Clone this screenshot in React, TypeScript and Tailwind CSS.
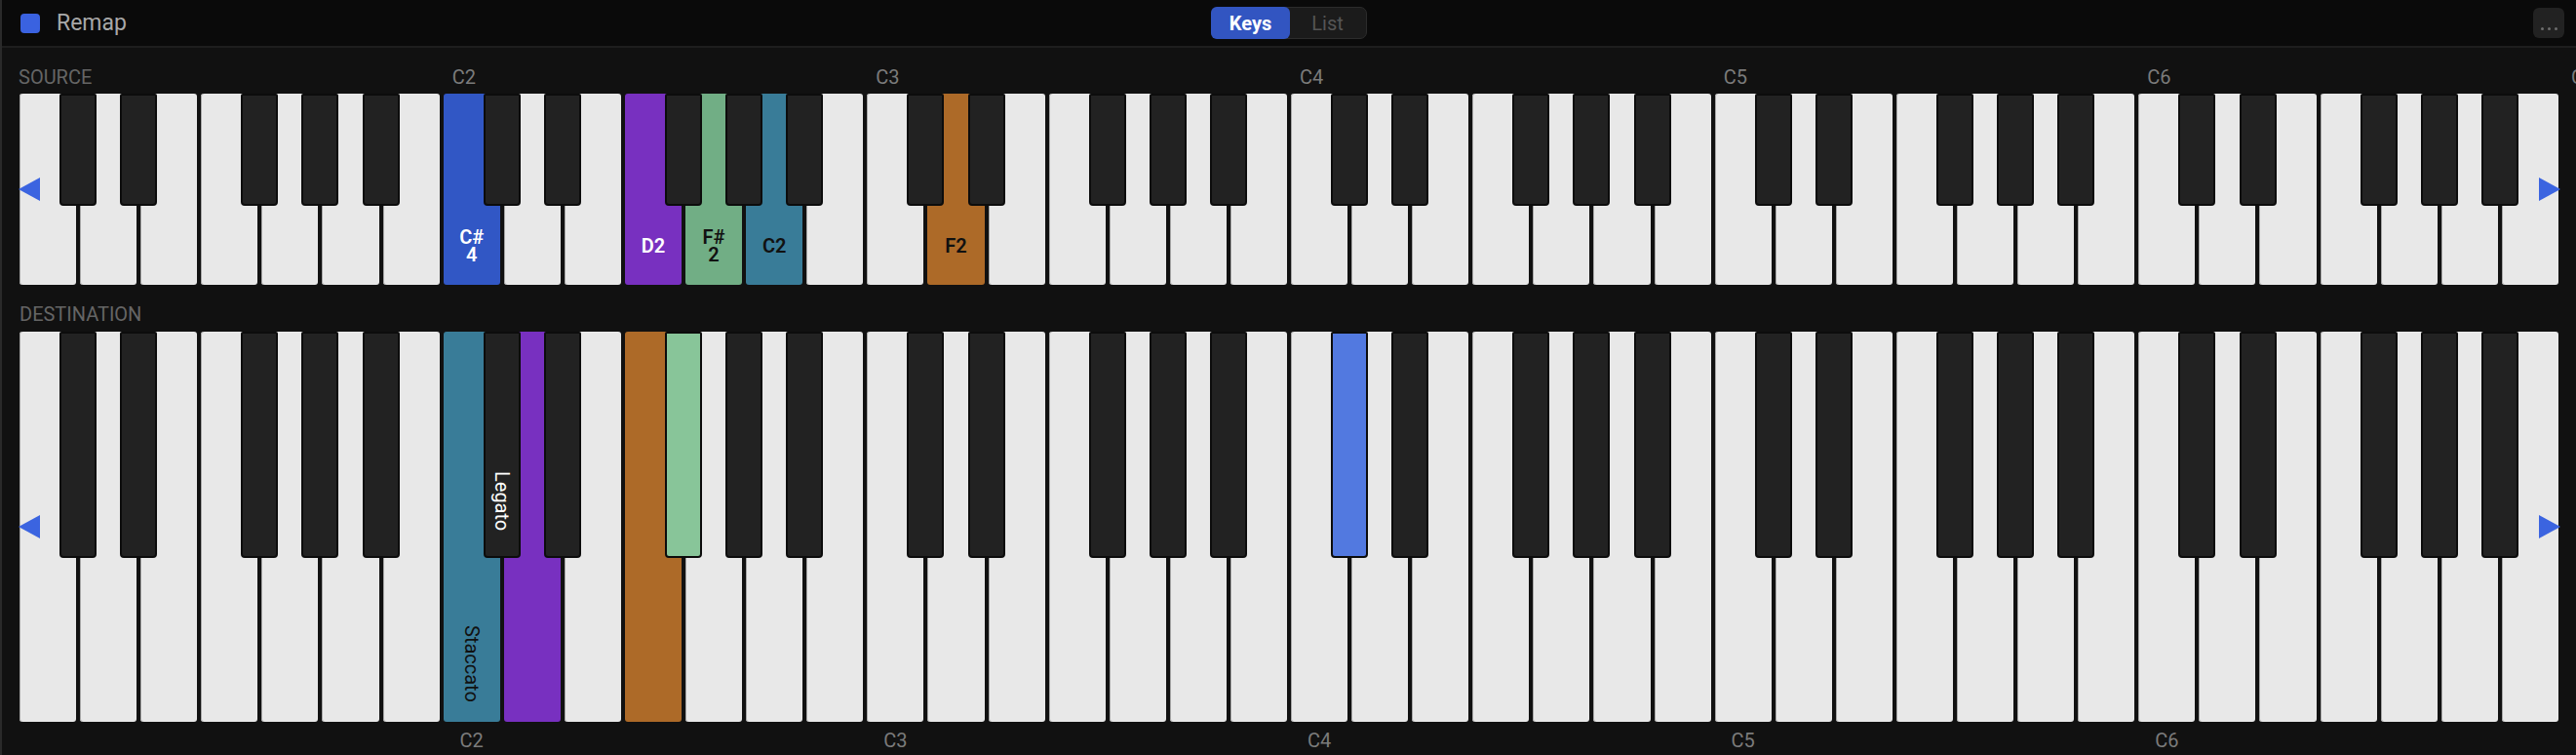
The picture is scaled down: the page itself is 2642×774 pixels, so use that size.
import clsx from "clsx";

const WHITE_COUNT = 42;
const WHITES = Array.from({ length: WHITE_COUNT }, (_, i) => i);
// white keys that have a black key on their right (C, D, F, G, A)
const HAS_SHARP = [true, true, false, true, true, true, false];

type WhiteMark = {
  bg: string;
  text?: string;
  lines?: string[];
  vertical?: string;
};

type BlackMark = {
  bg?: string;
  vertical?: string;
};

const sourceWhites: Record<number, WhiteMark> = {
  7: { bg: "bg-[#3157c5]", text: "text-white", lines: ["C#", "4"] },
  10: { bg: "bg-[#7830c0]", text: "text-white", lines: ["D2"] },
  11: { bg: "bg-[#71ae85]", text: "text-[#111]", lines: ["F#", "2"] },
  12: { bg: "bg-[#397c98]", text: "text-[#111]", lines: ["C2"] },
  15: { bg: "bg-[#ad6a28]", text: "text-[#111]", lines: ["F2"] },
};

const destWhites: Record<number, WhiteMark> = {
  7: { bg: "bg-[#397c98]", text: "text-[#111]", vertical: "Staccato" },
  8: { bg: "bg-[#7830c0]" },
  10: { bg: "bg-[#ad6a28]" },
};

// keyed by the white key on the left of the black key
const destBlacks: Record<number, BlackMark> = {
  7: { vertical: "Legato" },
  10: { bg: "bg-[#88c599]" },
  21: { bg: "bg-[#5279e0]" },
};

function octaveOf(w: number) {
  return 1 + Math.floor(w / 7);
}

function Arrow({ dir }: { dir: "left" | "right" }) {
  return (
    <svg
      width="22"
      height="24"
      viewBox="0 0 22 24"
      className={clsx(
        "pointer-events-none absolute top-1/2 -translate-y-1/2",
        dir === "left" ? "left-[-1px]" : "right-[-2px]"
      )}
    >
      <polygon
        points={dir === "left" ? "0,12 22,0 22,24" : "22,12 0,0 0,24"}
        fill="#3b64e0"
      />
    </svg>
  );
}

function WhiteKey({ mark, blackH }: { mark?: WhiteMark; blackH: string }) {
  return (
    <div
      className={clsx(
        "flex min-w-0 flex-1 flex-col rounded-[3px]",
        mark ? mark.bg : "bg-[#e8e8e8] shadow-[inset_1px_0_0_#a6a6a6]"
      )}
    >
      {mark?.lines && (
        <>
          <div className={clsx("shrink-0", blackH)} />
          <div
            className={clsx(
              "flex flex-1 flex-col items-center justify-center text-[20px] font-semibold leading-[18px]",
              mark.text
            )}
          >
            {mark.lines.map((l) => (
              <span key={l}>{l}</span>
            ))}
          </div>
        </>
      )}
      {mark?.vertical && (
        <div
          className={clsx(
            "flex flex-1 flex-col items-center justify-end pb-[20px] text-[20px] leading-6",
            mark.text
          )}
        >
          <span className="[writing-mode:vertical-rl]">{mark.vertical}</span>
        </div>
      )}
    </div>
  );
}

function Keyboard({
  height,
  blackH,
  whites,
  blacks,
}: {
  height: string;
  blackH: string;
  whites: Record<number, WhiteMark>;
  blacks: Record<number, BlackMark>;
}) {
  return (
    <div className={clsx("relative flex gap-[4px]", height)}>
      {WHITES.map((w) => (
        <WhiteKey key={w} mark={whites[w]} blackH={blackH} />
      ))}
      {WHITES.filter((w) => HAS_SHARP[w % 7] && w < WHITE_COUNT - 1).map((w) => {
        const mark = blacks[w];
        return (
          <div
            key={`b${w}`}
            className={clsx(
              "absolute top-0 flex w-[38px] flex-col items-center justify-end rounded-t-[2px] rounded-b-[4px] border-2 border-[#0c0c0c] pb-[26px]",
              blackH,
              mark?.bg ?? "bg-[#222222]"
            )}
            style={{ left: `calc(${w + 1} * (100% + 4px) / ${WHITE_COUNT} - 21px)` }}
          >
            {mark?.vertical && (
              <span className="text-[20px] leading-6 text-white [writing-mode:vertical-rl]">
                {mark.vertical}
              </span>
            )}
          </div>
        );
      })}
      <Arrow dir="left" />
      <Arrow dir="right" />
    </div>
  );
}

function SourceLabels() {
  return (
    <div className="flex h-6 gap-[4px] text-[20px] leading-6 text-[#7b7b7b]">
      {WHITES.map((w) => (
        <div key={w} className="relative min-w-0 flex-1 whitespace-nowrap">
          {w === 0 && <span className="ml-[-1px] text-[#656565]">SOURCE</span>}
          {w > 0 && w % 7 === 0 && <span className="pl-[9px]">C{octaveOf(w)}</span>}
          {w === WHITE_COUNT - 1 && (
            <span className="absolute left-[calc(100%+13px)] top-0">C7</span>
          )}
        </div>
      ))}
    </div>
  );
}

function DestinationLabels() {
  return (
    <div className="flex h-6 gap-[4px] text-[20px] leading-6 text-[#7b7b7b]">
      {WHITES.map((w) => (
        <div key={w} className="min-w-0 flex-1 text-center">
          {w > 0 && w % 7 === 0 ? `C${octaveOf(w)}` : ""}
        </div>
      ))}
    </div>
  );
}

export default function App() {
  return (
    <div className="h-screen w-full overflow-hidden border-l-2 border-[#2a2a2a] bg-[#111111] font-[Roboto,'Liberation_Sans',sans-serif]">
      <header className="grid h-[49px] grid-cols-[1fr_auto_1fr] items-center border-b-2 border-[#1e1e1e] bg-[#0a0a0a] pl-[19px] pr-[12px]">
        <div className="flex items-center gap-[17px]">
          <div className="h-[20px] w-[20px] rounded-[4px] bg-[#3a62e0]" />
          <span className="text-[23px] leading-7 text-[#a8a8a8]">Remap</span>
        </div>
        <div className="-ml-[7px] flex h-[33px] w-[160px] rounded-[7px] border border-[#2c2c2c] bg-[#1b1b1b]">
          <div className="-m-px flex w-[81px] items-center justify-center rounded-[6px] bg-[#3255c1] text-[20px] font-bold text-white">
            Keys
          </div>
          <div className="flex flex-1 items-center justify-center text-[20px] text-[#555555]">
            List
          </div>
        </div>
        <div className="flex justify-end">
          <div className="flex h-[31px] w-[32px] items-end justify-center gap-[4px] rounded-[6px] bg-[#222222] pb-[8px]">
            <span className="h-[3px] w-[3px] rounded-full bg-[#6d6d6d]" />
            <span className="h-[3px] w-[3px] rounded-full bg-[#6d6d6d]" />
            <span className="h-[3px] w-[3px] rounded-full bg-[#6d6d6d]" />
          </div>
        </div>
      </header>

      <section className="pl-[18px] pr-[18px] pt-[18px]">
        <SourceLabels />
        <div className="mt-[5px]">
          <Keyboard
            height="h-[196px]"
            blackH="h-[115px]"
            whites={sourceWhites}
            blacks={{}}
          />
        </div>
      </section>

      <section className="pl-[18px] pr-[18px] pt-[18px]">
        <div className="h-6 text-[20px] leading-6 text-[#656565]">DESTINATION</div>
        <div className="mt-[6px]">
          <Keyboard
            height="h-[400px]"
            blackH="h-[232px]"
            whites={destWhites}
            blacks={destBlacks}
          />
        </div>
        <div className="mt-[7px]">
          <DestinationLabels />
        </div>
      </section>
    </div>
  );
}
